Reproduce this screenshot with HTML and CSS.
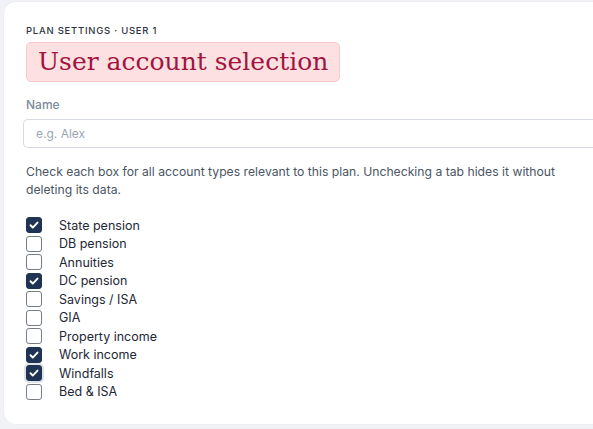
FILE: index.html
```html
<!DOCTYPE html>
<html>
<head>
<meta charset="utf-8">
<link rel="stylesheet" href="styles.css">
</head>
<body>
<div class="card">
  <div class="eyebrow">PLAN SETTINGS · USER 1</div>
  <h1 class="title">User account selection</h1>
  <label class="field-label" for="name">Name</label>
  <input id="name" class="text-input" type="text" placeholder="e.g. Alex">
  <p class="help">Check each box for all account types relevant to this plan. Unchecking a tab hides it without deleting its data.</p>
  <ul class="checks">
    <li><span class="box on"><svg viewBox="0 0 16 16"><path d="M4 8.3l2.6 2.6L12 5.2" /></svg></span><span class="lbl">State pension</span></li>
    <li><span class="box"></span><span class="lbl">DB pension</span></li>
    <li><span class="box"></span><span class="lbl">Annuities</span></li>
    <li><span class="box on"><svg viewBox="0 0 16 16"><path d="M4 8.3l2.6 2.6L12 5.2" /></svg></span><span class="lbl">DC pension</span></li>
    <li><span class="box"></span><span class="lbl">Savings / ISA</span></li>
    <li><span class="box"></span><span class="lbl">GIA</span></li>
    <li><span class="box"></span><span class="lbl">Property income</span></li>
    <li><span class="box on"><svg viewBox="0 0 16 16"><path d="M4 8.3l2.6 2.6L12 5.2" /></svg></span><span class="lbl">Work income</span></li>
    <li><span class="box on focus"><svg viewBox="0 0 16 16"><path d="M4 8.3l2.6 2.6L12 5.2" /></svg></span><span class="lbl">Windfalls</span></li>
    <li><span class="box"></span><span class="lbl">Bed &amp; ISA</span></li>
  </ul>
</div>
</body>
</html>
```
FILE: styles.css
```css
html, body { margin: 0; padding: 0; }
body {
  background: #f1f2f5;
  font-family: "Inter", "Noto Sans", sans-serif;
  width: 593px;
  height: 429px;
  overflow: hidden;
  padding: 2px 0 0 4px;
  box-sizing: border-box;
}
.card {
  background: #ffffff;
  border-radius: 12px 0 0 12px;
  height: 422px;
  box-sizing: border-box;
  padding: 23px 0 0 22px;
  box-shadow: 0 0 0 1px #eceef2;
}
.eyebrow {
  font-size: 9.5px;
  letter-spacing: 0.75px;
  color: #2f3542;
  font-weight: 500;
  line-height: 12px;
}
.title {
  display: inline-block;
  margin: 5px 0 0 0;
  font-family: "DejaVu Serif", "Liberation Serif", serif;
  font-weight: 400;
  font-size: 25px;
  line-height: 38px;
  color: #a3143f;
  background: #fde1e2;
  border: 1px solid #f7c9cc;
  border-radius: 5px;
  padding: 0 11px;
}
.field-label {
  display: block;
  margin-top: 16px;
  font-size: 12px;
  color: #7c8a99;
  font-weight: 500;
  line-height: 14px;
}
.text-input {
  display: block;
  margin: 7px 0 0 -3px;
  width: calc(100% + 3px);
  height: 29px;
  box-sizing: border-box;
  border: 1px solid #d6dce2;
  border-right: none;
  border-radius: 5px 0 0 5px;
  padding: 0 12px;
  font-family: inherit;
  font-size: 12px;
  color: #333;
}
.text-input::placeholder { color: #9aa6b2; }
.help {
  margin: 15px 0 0 0;
  font-size: 12.2px;
  line-height: 18px;
  color: #4a5563;
  width: 545px;
}
.checks {
  list-style: none;
  margin: 18px 0 0 0;
  padding: 0;
  display: flex;
  flex-direction: column;
  gap: 2.5px;
}
.checks li {
  display: flex;
  align-items: center;
  height: 16px;
}
.box {
  width: 14px;
  height: 14px;
  border: 1.2px solid #737c87;
  border-radius: 3px;
  box-sizing: content-box;
  display: flex;
  align-items: center;
  justify-content: center;
}
.box.on {
  background: #1f3354;
  border-color: #1f3354;
}
.box.focus {
  box-shadow: 0 0 0 2px #dde3ea;
}
.box svg { width: 14px; height: 14px; }
.box svg path {
  fill: none;
  stroke: #ffffff;
  stroke-width: 2.2;
  stroke-linecap: round;
  stroke-linejoin: round;
}
.lbl {
  margin-left: 17px;
  font-size: 12.5px;
  color: #1e2836;
}
```
